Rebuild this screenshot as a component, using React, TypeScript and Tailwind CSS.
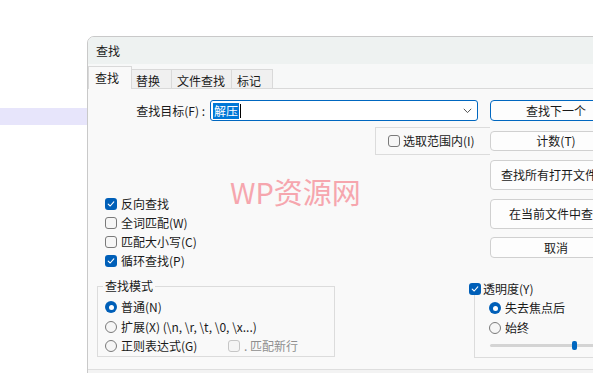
import React from "react";

const FONT = "font-['Noto_Sans_CJK_SC','Microsoft_YaHei',sans-serif]";

function CheckBox({ checked = false, disabled = false }: { checked?: boolean; disabled?: boolean }) {
  if (checked) {
    return (
      <span className="flex h-[12px] w-[12px] shrink-0 items-center justify-center rounded-[3px] bg-[#005fb8]">
        <svg width="8" height="8" viewBox="0 0 8 8" fill="none">
          <path d="M1.2 4.2 L3.2 6 L6.8 1.8" stroke="white" strokeWidth="1.1" strokeLinecap="round" strokeLinejoin="round" />
        </svg>
      </span>
    );
  }
  return (
    <span
      className={`block h-[12px] w-[12px] shrink-0 rounded-[3px] border ${
        disabled ? "border-[#c6c6c6] bg-[#f5f5f5]" : "border-[#7a7a7a] bg-[#f6f6f6]"
      }`}
    />
  );
}

function Radio({ checked = false }: { checked?: boolean }) {
  if (checked) {
    return (
      <span className="flex h-[12px] w-[12px] shrink-0 items-center justify-center rounded-full bg-[#005fb8]">
        <span className="block h-[5px] w-[5px] rounded-full bg-white" />
      </span>
    );
  }
  return <span className="block h-[12px] w-[12px] shrink-0 rounded-full border border-[#7a7a7a] bg-[#f6f6f6]" />;
}

function Btn({
  children,
  h,
  primary = false,
  className = "",
}: {
  children: React.ReactNode;
  h: string;
  primary?: boolean;
  className?: string;
}) {
  return (
    <div
      className={`flex w-[132px] shrink-0 items-center overflow-hidden rounded-[4px] border bg-[#fdfdfd] whitespace-nowrap ${h} ${
        primary ? "border-[#0067c0]" : "border-[#d0d0d0]"
      } ${className || "justify-center"}`}
    >
      {children}
    </div>
  );
}

function CheckRow({ checked, label }: { checked?: boolean; label: string }) {
  return (
    <div className="flex h-[19px] items-center gap-[4px]">
      <CheckBox checked={checked} />
      <span>{label}</span>
    </div>
  );
}

export default function App() {
  return (
    <div className={`relative h-[373px] w-[593px] overflow-hidden bg-white text-[12px] text-[#1a1a1a] ${FONT}`}>
      {/* lavender strip behind the dialog */}
      <div className="absolute left-0 top-[108px] h-[17px] w-[90px] bg-[#e7e5fb]" />

      {/* dialog window */}
      <div className="absolute left-[87px] top-[36px] w-[560px] overflow-hidden rounded-tl-[7px] border border-[#c9c9c9] bg-[#f9f9f9]">
        {/* title bar */}
        <div className="flex h-[27px] items-center bg-[#eef2f1] pl-[8px] leading-none">查找</div>

        {/* tabs */}
        <div className="flex h-[25px] items-end border-b border-[#d9d9d9] bg-[#f7f8f8]">
          <div className="-mb-px flex h-[23px] w-[44px] items-start border border-b-0 border-[#d9d9d9] bg-[#f9f9f9] pl-[6px] pt-[3px] leading-[15px]">
            查找
          </div>
          <div className="flex h-[19px] w-[40px] items-start border border-b-0 border-l-0 border-[#d9d9d9] bg-[#f0f0f0] pl-[4px] pt-[3px] leading-[15px]">
            替换
          </div>
          <div className="flex h-[19px] w-[60px] items-start border border-b-0 border-l-0 border-[#d9d9d9] bg-[#f0f0f0] pl-[5px] pt-[3px] leading-[15px]">
            文件查找
          </div>
          <div className="flex h-[19px] w-[41px] items-start border border-b-0 border-l-0 border-[#d9d9d9] bg-[#f0f0f0] pl-[5px] pt-[3px] leading-[15px]">
            标记
          </div>
        </div>

        {/* content */}
        <div className="relative flex h-[281px] flex-col border-b border-[#dedede] leading-[16px]">
          {/* row: find what */}
          <div className="mt-[11px] flex h-[21px] items-center">
            <div className="w-[119px] shrink-0 pr-[2px] text-right">查找目标(F) :</div>
            <div className="ml-[3px] flex h-[21px] w-[268px] shrink-0 items-center rounded-[3px] border border-[#0067c0] bg-white pl-[2px] pr-[5px]">
              <span className="bg-[#0078d7] px-[1px] text-white">解压</span>
              <span className="ml-[1px] h-[14px] w-px bg-black" />
              <svg className="ml-auto" width="9" height="6" viewBox="0 0 9 6" fill="none">
                <path d="M0.8 0.8 L4.5 4.6 L8.2 0.8" stroke="#555" strokeWidth="1" />
              </svg>
            </div>
            <Btn h="h-[21px]" primary className="ml-[12px] justify-center">
              查找下一个
            </Btn>
          </div>

          {/* row: in selection + count */}
          <div className="mt-[6px] flex">
            <div className="ml-[287px] flex h-[28px] w-[115px] shrink-0 items-center gap-[3px] border border-r-0 border-[#dcdcdc] pl-[12px]">
              <CheckBox />
              <span>选取范围内(I)</span>
            </div>
            <Btn h="h-[20px]" className="mt-[4px] justify-center">
              计数(T)
            </Btn>
          </div>

          {/* row: options + buttons */}
          <div className="mt-[5px] flex">
            <div className="w-[402px] shrink-0 pl-[17px] pt-[34px]">
              <CheckRow checked label="反向查找" />
              <CheckRow label="全词匹配(W)" />
              <CheckRow label="匹配大小写(C)" />
              <CheckRow checked label="循环查找(P)" />
            </div>
            <div className="flex shrink-0 flex-col">
              <Btn h="h-[30px]" className="justify-start pl-[10px]">
                查找所有打开文件
              </Btn>
              <Btn h="h-[30px]" className="mt-[9px] justify-start pl-[18px]">
                在当前文件中查找
              </Btn>
              <Btn h="h-[21px]" className="mt-[8px] justify-center">
                取消
              </Btn>
            </div>
          </div>

          {/* row: search mode + transparency */}
          <div className="mt-[9px] flex">
            <div className="relative ml-[9px] mt-[7px] h-[71px] w-[238px] shrink-0 border border-[#dcdcdc] pl-[7px] pt-[10px]">
              <span className="absolute -top-[9px] left-[5px] bg-[#f9f9f9] px-[2px]">查找模式</span>
              <div className="flex h-[20px] items-center gap-[4px]">
                <Radio checked />
                <span>普通(N)</span>
              </div>
              <div className="flex h-[19px] items-center gap-[4px]">
                <Radio />
                <span>扩展(X) (\n, \r, \t, \0, \x...)</span>
              </div>
              <div className="flex h-[19px] items-center">
                <div className="flex w-[123px] items-center gap-[4px]">
                  <Radio />
                  <span>正则表达式(G)</span>
                </div>
                <CheckBox disabled />
                <span className="ml-[4px] text-[#8f8f8f]">. 匹配新行</span>
              </div>
            </div>

            <div className="ml-[134px] mt-[3px] flex w-[200px] shrink-0 flex-col">
              <div className="relative z-10 flex h-[13px] items-center gap-[2px]">
                <CheckBox checked />
                <span>透明度(Y)</span>
              </div>
              <div className="ml-[5px] h-[63px] border-b border-l border-[#dcdcdc] pl-[14px] pt-[3px]">
                <div className="flex h-[20px] items-center gap-[4px]">
                  <Radio checked />
                  <span>失去焦点后</span>
                </div>
                <div className="flex h-[20px] items-center gap-[4px]">
                  <Radio />
                  <span>始终</span>
                </div>
                <div className="relative mt-[3px] h-[9px]">
                  <div className="absolute left-[1px] right-0 top-[3px] h-[3px] rounded-full bg-[#d4d4d4]" />
                  <div className="absolute left-[83px] top-0 h-[9px] w-[5px] rounded-[2px] bg-[#0067c0]" />
                </div>
              </div>
            </div>
          </div>

          {/* watermark */}
          <div className="pointer-events-none absolute left-[142px] top-[88px] text-[29px] leading-none text-[#f6a6ae]">
            WP资源网
          </div>
        </div>
        <div className="h-[20px] bg-[#f3f3f3]" />
      </div>
    </div>
  );
}
